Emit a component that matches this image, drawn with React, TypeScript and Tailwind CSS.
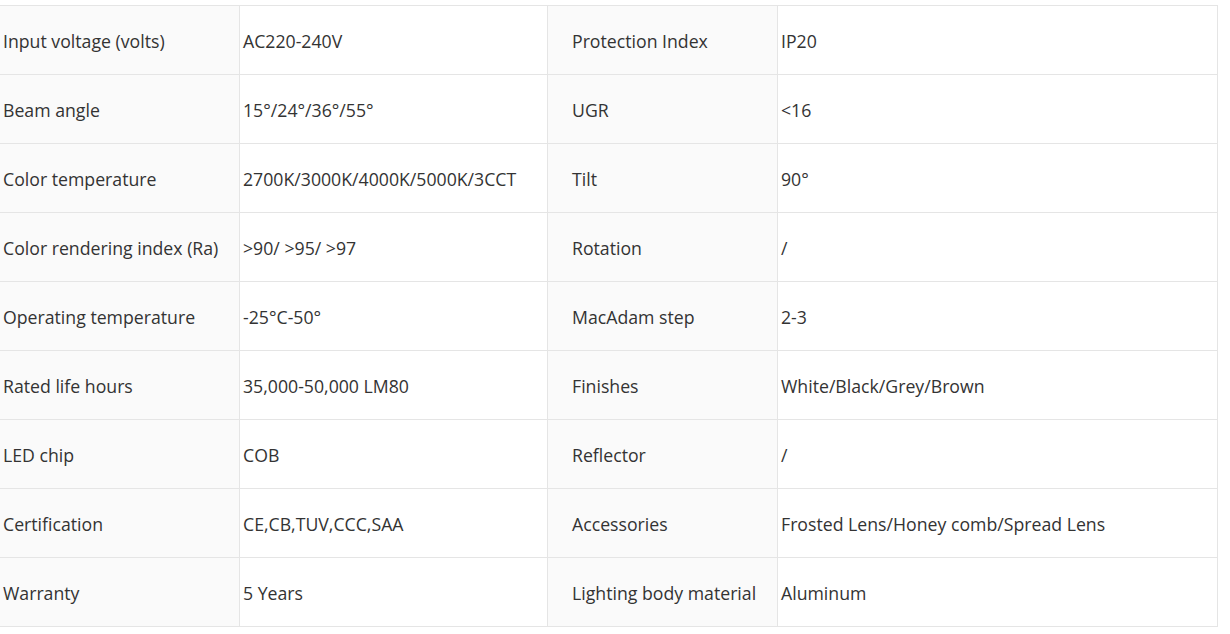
const rows: [string, string, string, string][] = [
  ["Input voltage (volts)", "AC220-240V", "Protection Index", "IP20"],
  ["Beam angle", "15°/24°/36°/55°", "UGR", "<16"],
  ["Color temperature", "2700K/3000K/4000K/5000K/3CCT", "Tilt", "90°"],
  ["Color rendering index (Ra)", ">90/ >95/ >97", "Rotation", "/"],
  ["Operating temperature", "-25°C-50°", "MacAdam step", "2-3"],
  ["Rated life hours", "35,000-50,000 LM80", "Finishes", "White/Black/Grey/Brown"],
  ["LED chip", "COB", "Reflector", "/"],
  ["Certification", "CE,CB,TUV,CCC,SAA", "Accessories", "Frosted Lens/Honey comb/Spread Lens"],
  ["Warranty", "5 Years", "Lighting body material", "Aluminum"],
];

export default function App() {
  return (
    <div className="min-h-screen bg-white pt-[5px] text-[17.7px] text-[#333333] [font-family:'Open_Sans',sans-serif]">
      <div className="w-[1218px] border-t border-[#e5e5e5]">
        {rows.map(([k1, v1, k2, v2]) => (
          <div key={k1} className="flex h-[69px] border-b border-[#e5e5e5]">
            <div className="flex w-[240px] items-center whitespace-nowrap border-r border-[#e5e5e5] bg-[#fafafa] pl-[3px] pt-[2px]">
              {k1}
            </div>
            <div className="flex w-[308px] items-center whitespace-nowrap border-r border-[#e5e5e5] bg-white pl-[3px] pt-[2px]">
              {v1}
            </div>
            <div className="flex w-[230px] items-center whitespace-nowrap border-r border-[#e5e5e5] bg-[#fafafa] pl-[24px] pt-[2px]">
              {k2}
            </div>
            <div className="flex w-[440px] items-center whitespace-nowrap border-r border-[#e5e5e5] bg-white pl-[3px] pt-[2px]">
              {v2}
            </div>
          </div>
        ))}
      </div>
    </div>
  );
}
